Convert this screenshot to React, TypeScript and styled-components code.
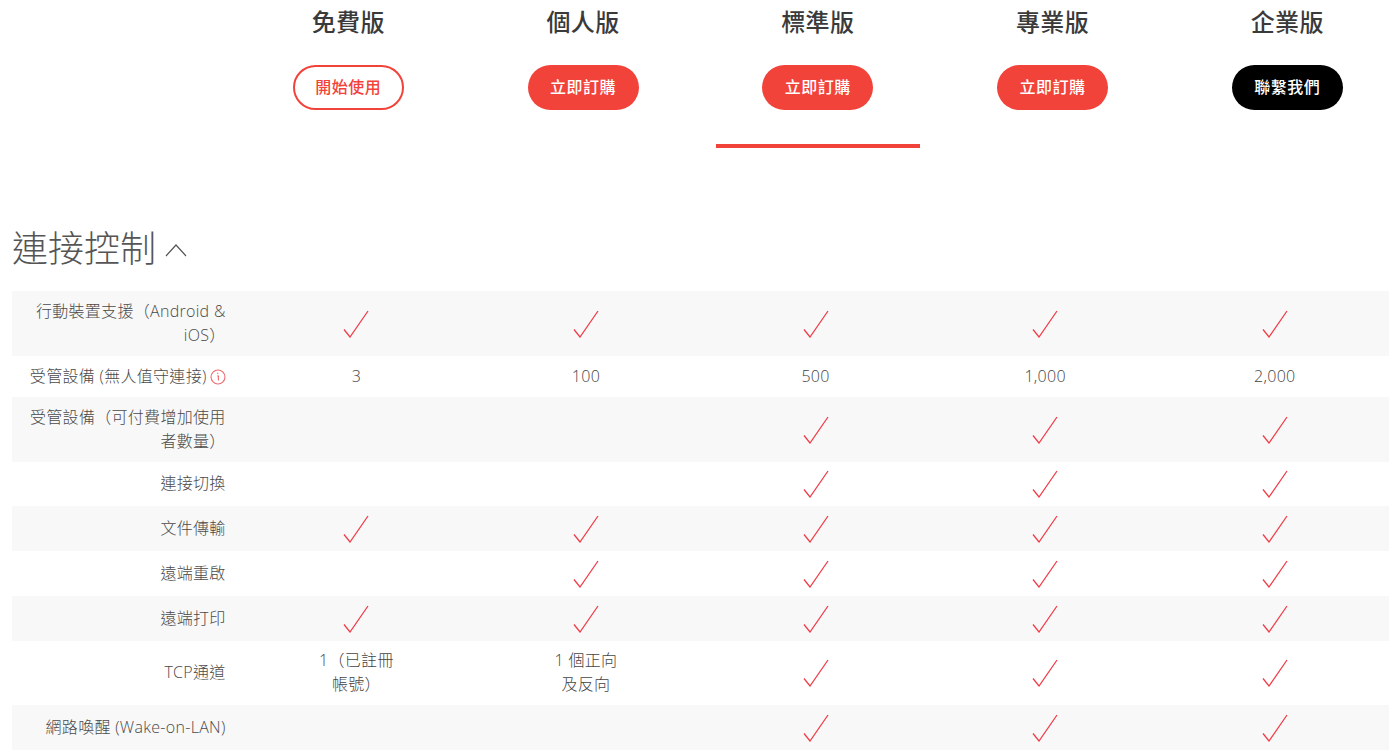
import React from "react";
import styled, { createGlobalStyle } from "styled-components";

const FONT = `"Open Sans", "Noto Sans CJK TC", sans-serif`;

const Global = createGlobalStyle`
  html, body { margin: 0; padding: 0; background: #fff; overflow: hidden; height: 755px; }
  body { font-family: ${FONT}; }
`;

const Page = styled.div`
  width: 1400px;
  height: 755px;
  overflow: hidden;
  padding: 0 11px 0 12px;
  box-sizing: border-box;
`;

const PlanHeader = styled.div`
  display: grid;
  grid-template-columns: repeat(5, 234.75px);
  margin-left: 219px;
  height: 148px;
  width: 1174px;
`;

const Plan = styled.div<{ $active?: boolean }>`
  display: flex;
  flex-direction: column;
  align-items: center;
  position: relative;
  &::after {
    content: "";
    display: ${(p) => (p.$active ? "block" : "none")};
    position: absolute;
    left: 15px;
    right: 15px;
    bottom: 0;
    height: 4px;
    background: #f2433b;
  }
`;

const PlanName = styled.div`
  font-size: 24px;
  line-height: 32px;
  font-weight: 500;
  letter-spacing: 0.5px;
  color: #3a3a3a;
  margin-top: 6px;
  margin-bottom: 1px;
`;

const Cta = styled.div<{ $kind: "outline" | "red" | "black" }>`
  box-sizing: border-box;
  width: 111px;
  height: 45px;
  margin-top: 26px;
  padding-bottom: 4px;
  border-radius: 23px;
  display: flex;
  align-items: center;
  justify-content: center;
  font-size: 16px;
  font-weight: 500;
  letter-spacing: 0.5px;
  color: ${(p) => (p.$kind === "outline" ? "#f2433b" : "#fff")};
  background: ${(p) => (p.$kind === "outline" ? "#fff" : p.$kind === "red" ? "#f2433b" : "#000")};
  border: ${(p) => (p.$kind === "outline" ? "2px solid #f2433b" : "none")};
`;

const SectionTitle = styled.div`
  display: flex;
  align-items: center;
  height: 143px;
  box-sizing: border-box;
  padding-top: 53px;
  font-size: 36px;
  font-weight: 300;
  color: #555;
  gap: 9px;
`;

const Table = styled.div`
  display: flex;
  flex-direction: column;
`;

const Row = styled.div<{ $h: number; $shade: boolean }>`
  display: grid;
  grid-template-columns: repeat(6, 229.6px);
  height: ${(p) => p.$h}px;
  background: ${(p) => (p.$shade ? "#f8f8f8" : "#fff")};
`;

const Label = styled.div`
  display: flex;
  align-items: center;
  justify-content: flex-end;
  text-align: right;
  box-sizing: border-box;
  padding: 0 16px 2px 12px;
  font-size: 16px;
  line-height: 24px;
  font-weight: 300;
  letter-spacing: 0.3px;
  color: #4a4a4a;
`;

const Cell = styled.div`
  display: flex;
  align-items: center;
  justify-content: center;
  text-align: center;
  box-sizing: border-box;
  padding: 0 0 2px;
  font-size: 16px;
  line-height: 24px;
  font-weight: 300;
  letter-spacing: 0.3px;
  white-space: pre-line;
  color: #444;
`;

const CheckWrap = styled.svg`
  margin-top: 2px;
`;

const ChevronIcon = styled.svg`
  margin-top: 7px;
`;

const InfoIcon = styled.svg`
  flex: none;
  margin-left: 3px;
  margin-top: 2px;
`;

const Check = () => (
  <CheckWrap width="26" height="28" viewBox="0 0 26 28" fill="none">
    <path d="M1 19.5 L7 27 L25 1" stroke="#ef3e4a" strokeWidth="1.3" />
  </CheckWrap>
);

const Chevron = () => (
  <ChevronIcon width="22" height="14" viewBox="0 0 22 14" fill="none">
    <path d="M1 13 L11 2 L21 13" stroke="#555" strokeWidth="1.2" />
  </ChevronIcon>
);

const Info = () => (
  <InfoIcon width="16" height="16" viewBox="0 0 16 16" fill="none">
    <circle cx="8" cy="8" r="7" stroke="#ee6a6f" strokeWidth="1.1" />
    <path d="M7 4.2h1.4M7 7h1.4v4.5" stroke="#ee6a6f" strokeWidth="1.1" />
  </InfoIcon>
);

const plans: { name: string; cta: string; kind: "outline" | "red" | "black"; active?: boolean }[] = [
  { name: "免費版", cta: "開始使用", kind: "outline" },
  { name: "個人版", cta: "立即訂購", kind: "red" },
  { name: "標準版", cta: "立即訂購", kind: "red", active: true },
  { name: "專業版", cta: "立即訂購", kind: "red" },
  { name: "企業版", cta: "聯繫我們", kind: "black" },
];

const V = true;
const rows: { label: React.ReactNode; h: number; cells: (boolean | string)[] }[] = [
  { label: "行動裝置支援（Android & iOS）", h: 65, cells: [V, V, V, V, V] },
  { label: <>受管設備 (無人值守連接)<Info /></>, h: 41, cells: ["3", "100", "500", "1,000", "2,000"] },
  { label: "受管設備（可付費增加使用者數量）", h: 65, cells: [false, false, V, V, V] },
  { label: "連接切換", h: 44, cells: [false, false, V, V, V] },
  { label: "文件傳輸", h: 45, cells: [V, V, V, V, V] },
  { label: "遠端重啟", h: 45, cells: [false, V, V, V, V] },
  { label: "遠端打印", h: 45, cells: [V, V, V, V, V] },
  { label: "TCP通道", h: 64, cells: ["1（已註冊\n帳號）", "1 個正向\n及反向", V, V, V] },
  { label: "網路喚醒 (Wake-on-LAN)", h: 45, cells: [false, false, V, V, V] },
];

export default function App() {
  return (
    <Page>
      <Global />
      <PlanHeader>
        {plans.map((p) => (
          <Plan key={p.name} $active={p.active}>
            <PlanName>{p.name}</PlanName>
            <Cta $kind={p.kind}>{p.cta}</Cta>
          </Plan>
        ))}
      </PlanHeader>
      <SectionTitle>
        連接控制
        <Chevron />
      </SectionTitle>
      <Table>
        {rows.map((r, i) => (
          <Row key={i} $h={r.h} $shade={i % 2 === 0}>
            <Label>{r.label}</Label>
            {r.cells.map((c, j) => (
              <Cell key={j}>{c === true ? <Check /> : c === false ? null : c}</Cell>
            ))}
          </Row>
        ))}
      </Table>
    </Page>
  );
}
